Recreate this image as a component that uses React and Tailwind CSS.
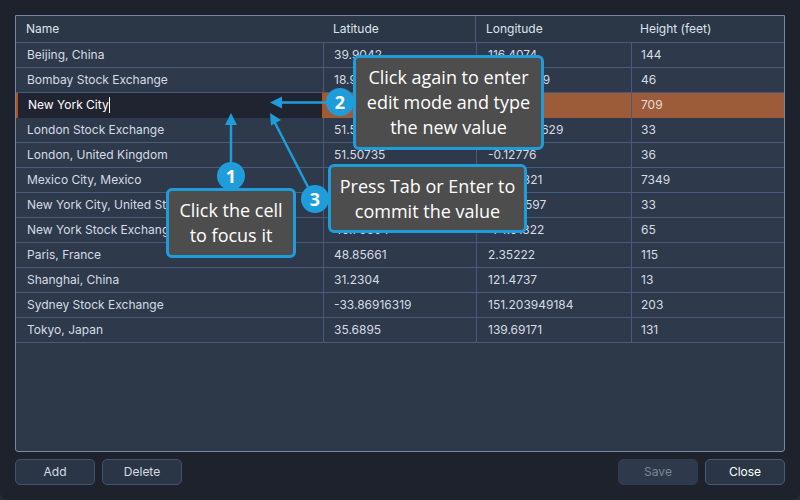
const rows = [
  ['Beijing, China', '39.9042', '116.4074', '144'],
  ['Bombay Stock Exchange', '18.92989', '72.833349', '46'],
  ['New York City', '40.7128', '-74.006', '709'],
  ['London Stock Exchange', '51.51468', '-0.09929629', '33'],
  ['London, United Kingdom', '51.50735', '-0.12776', '36'],
  ['Mexico City, Mexico', '19.4326', '-99.13321', '7349'],
  ['New York City, United States', '40.71427', '-74.00597', '33'],
  ['New York Stock Exchange', '40.70694', '-74.01322', '65'],
  ['Paris, France', '48.85661', '2.35222', '115'],
  ['Shanghai, China', '31.2304', '121.4737', '13'],
  ['Sydney Stock Exchange', '-33.86916319', '151.203949184', '203'],
  ['Tokyo, Japan', '35.6895', '139.69171', '131'],
];

function Row({row}) {
  return (
    <div className="grid h-[25px] grid-cols-[308px_153px_155px_152px] border-b border-[#4b5a7a] bg-[#2e394b] text-[#d6dce6]">
      <div className="flex items-center border-r border-[#4b5a7a] pl-[11px]">{row[0]}</div>
      <div className="flex items-center border-r border-[#4b5a7a] pl-[10px]">{row[1]}</div>
      <div className="flex items-center border-r border-[#4b5a7a] pl-[11px]">{row[2]}</div>
      <div className="flex items-center pl-[9px]">{row[3]}</div>
    </div>
  );
}

function EditRow({row}) {
  return (
    <div className="grid h-[25px] grid-cols-[308px_153px_155px_152px] bg-[#9c5c3a] text-[#e6dcd4]">
      <div className="flex items-center border-x-2 border-[#b5511a] bg-[#1f2430] pb-px pl-[10px] text-white">
        <span>{row[0]}</span>
        <span className="h-[16px] w-px bg-white" />
      </div>
      <div className="flex items-center border-r border-[#4b5a7a] pb-px pl-[10px]">{row[1]}</div>
      <div className="flex items-center border-r border-[#4b5a7a] pb-px pl-[11px]">{row[2]}</div>
      <div className="flex items-center pb-px pl-[9px]">{row[3]}</div>
    </div>
  );
}

function Callout({className, children}) {
  return (
    <div
      className={`absolute flex flex-col items-center justify-center rounded-[6px] border-[3px] border-[#1f9ddb] bg-[#4d4d4d] text-center font-['Open_Sans',sans-serif] text-[18px] leading-[25px] text-white ${className}`}
    >
      {children}
    </div>
  );
}

function Badge({className, children}) {
  return (
    <div
      className={`absolute flex h-[28px] w-[28px] items-center justify-center rounded-full bg-[#1f9ddb] font-['Open_Sans',sans-serif] text-[18px] font-bold text-white ${className}`}
    >
      {children}
    </div>
  );
}

function Button({disabled, bright, children}) {
  let look = 'border-[#43536f] bg-[#2a3646] text-[#d6dce6]';
  if (disabled) look = 'border-[#2f3b4e] bg-[#2e394b] text-[#7b8696]';
  if (bright) look = 'border-[#4b5a7a] bg-[#2a3646] text-white';
  return (
    <button type="button" className={`h-[26px] w-[80px] rounded-[5px] border text-[12px] ${look}`}>
      {children}
    </button>
  );
}

export default function App() {
  return (
    <div className="h-[500px] w-[800px] overflow-hidden bg-[#262b34]">
      <div className="relative flex h-full w-full flex-col rounded-b-[8px] bg-[#1d222c] p-[15px] font-['Inter',sans-serif] text-[12px]">
        <div className="flex-1 rounded-b-[3px] border border-[#7886a8] bg-[#2d3949]">
          <div className="grid h-[27px] grid-cols-[307px_153px_156px_152px] border-b border-[#4b5a7a] bg-[#2b3747] text-[#dfe4ec]">
            <div className="flex items-center pl-[10px]">Name</div>
            <div className="flex items-center border-r border-[#4b5a7a] pl-[10px]">Latitude</div>
            <div className="flex items-center pl-[10px]">Longitude</div>
            <div className="flex items-center pl-[8px]">Height (feet)</div>
          </div>
          {rows.map((row, i) =>
            i === 2 ? <EditRow key={row[0]} row={row} /> : <Row key={row[0]} row={row} />
          )}
        </div>

        <div className="mt-[7px] flex gap-[7px]">
          <Button>Add</Button>
          <Button>Delete</Button>
          <div className="flex-1" />
          <Button disabled>Save</Button>
          <Button bright>Close</Button>
        </div>

        {/* Annotations over the table */}
        <svg className="absolute left-0 top-0" width="800" height="500" fill="#1f9ddb">
          <path d="M231 165V122" stroke="#1f9ddb" strokeWidth="2.5" fill="none" />
          <path d="M231 113l-6 12h12z" />
          <path d="M327 102.500H280" stroke="#1f9ddb" strokeWidth="2.500" fill="none" />
          <path d="M270 102.500l12-6v12z" />
          <path d="M308 187L274 121" stroke="#1f9ddb" strokeWidth="2.500" fill="none" />
          <path d="M270 113l11 7-10 5.500z" />
        </svg>
        <Callout className="left-[353px] top-[55px] h-[95px] w-[191px]">
          <span>Click again to enter</span>
          <span>edit mode and type</span>
          <span>the new value</span>
        </Callout>
        <Callout className="left-[328px] top-[164px] h-[69px] w-[199px]">
          <span>Press Tab or Enter to</span>
          <span>commit the value</span>
        </Callout>
        <Callout className="left-[166px] top-[188px] h-[70px] w-[130px]">
          <span>Click the cell</span>
          <span>to focus it</span>
        </Callout>
        <Badge className="left-[217px] top-[162px]">1</Badge>
        <Badge className="left-[326px] top-[88px]">2</Badge>
        <Badge className="left-[301px] top-[185px]">3</Badge>
      </div>
    </div>
  );
}
